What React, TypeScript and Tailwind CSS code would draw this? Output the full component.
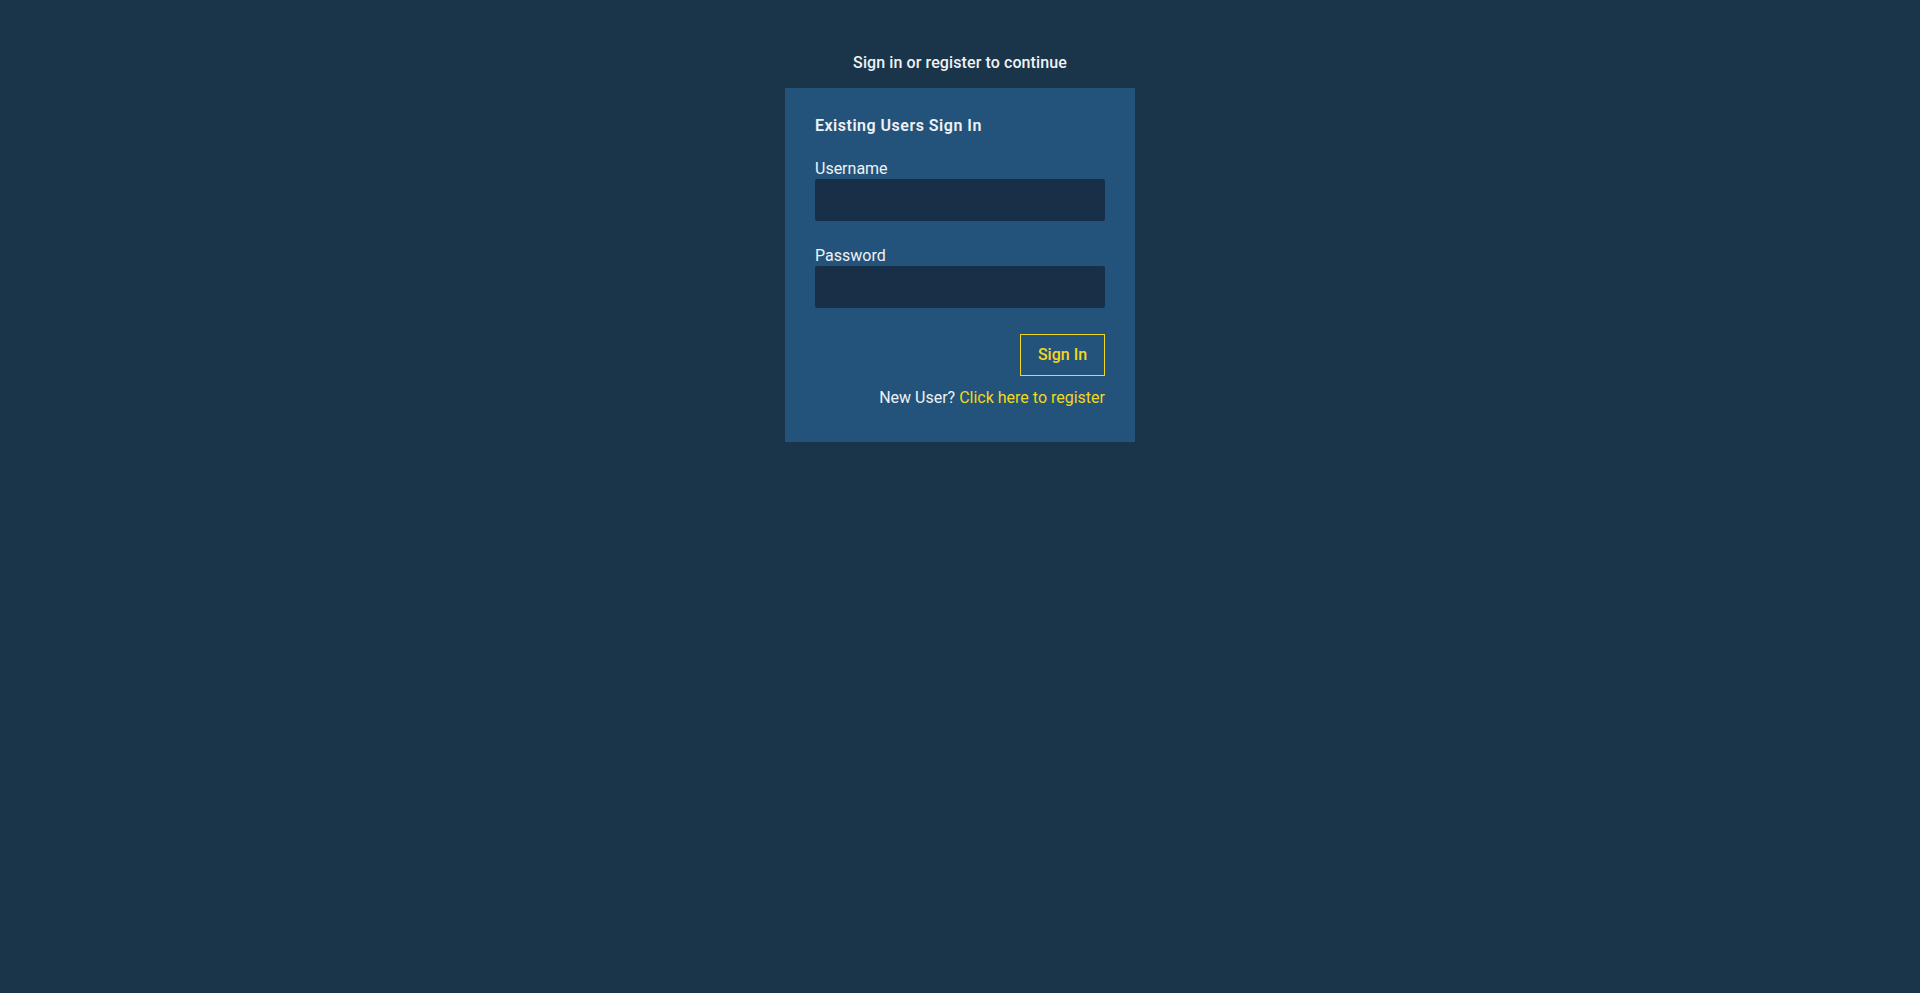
import React from "react";

export default function App() {
  return (
    <div
      className="min-h-screen w-full bg-[#1a3449] flex flex-col items-center pt-[51px] text-[#eef2f6]"
      style={{ fontFamily: 'Roboto, "Noto Sans", sans-serif' }}
    >
      <div className="text-[16px] leading-6 font-medium tracking-[0.1px] mb-[13px]">Sign in or register to continue</div>
      <div className="w-[350px] bg-[#23537a] px-[30px] pt-[26px] pb-[32px] flex flex-col">
        <div className="text-[16px] leading-6 font-semibold tracking-[0.5px]">Existing Users Sign In</div>
        <label className="mt-[21px] text-[16px] leading-5">Username</label>
        <input type="text" className="h-[42px] w-full rounded-[2px] bg-[#172f47] outline-none px-2 text-white" />
        <label className="mt-[25px] text-[16px] leading-5">Password</label>
        <input type="password" className="h-[42px] w-full rounded-[2px] bg-[#172f47] outline-none px-2 text-white" />
        <div className="flex justify-end mt-[26px]">
          <button className="h-[42px] w-[85px] border border-[#f2d81c] text-[#f2d81c] text-[16px] font-medium">Sign In</button>
        </div>
        <div className="flex justify-end mt-[10px] text-[16px] leading-6">
          <span>New User?&nbsp;</span>
          <a className="text-[#f2d81c] cursor-pointer">Click here to register</a>
        </div>
      </div>
    </div>
  );
}
